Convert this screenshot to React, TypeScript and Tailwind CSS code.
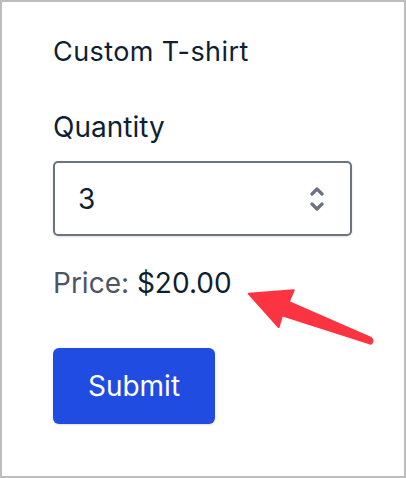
export default function App() {
  return (
    <div className="relative w-[406px] h-[478px] border-2 border-[#bdbdbd] bg-white pl-[51px] pt-[30px] font-['Inter',sans-serif] text-[#0f1f33]">
      <h1 className="text-[27px] leading-[39px] tracking-[0.015em]">Custom T-shirt</h1>

      <label className="block mt-[36px] text-[28px] leading-[40px]">Quantity</label>

      <div className="mt-[14px] flex items-center justify-between w-[299px] h-[75px] border-2 border-[#6b7280] rounded-[5px] pl-[23px] pr-[26px] shadow-sm">
        <span className="text-[28px] leading-none">3</span>
        <svg width="14" height="26" viewBox="0 0 14 26" fill="none" stroke="#6b7280" strokeWidth="3.2" strokeLinecap="round" strokeLinejoin="round">
          <path d="M2 8 L7 3 L12 8" />
          <path d="M2 18 L7 23 L12 18" />
        </svg>
      </div>

      <p className="mt-[29px] text-[28px] leading-[36px]">
        <span className="text-[#4b5563]">Price: </span>
        <span>$20.00</span>
      </p>

      <button className="mt-[47px] w-[162px] h-[76px] rounded-[6px] bg-[#214ce2] text-white text-[28px] shadow-sm">
        Submit
      </button>

      <svg className="absolute left-[242px] top-[284px]" width="134" height="62" viewBox="0 0 134 62">
        <path
          d="M4.7 7.7 L49.7 4.3 L44.7 16 L127 52 Q130 55 127 57.7 L38 29.3 L34.7 41 Z"
          fill="#fc3441"
          stroke="#fc3441"
          strokeWidth="2"
          strokeLinejoin="round"
        />
      </svg>
    </div>
  );
}
